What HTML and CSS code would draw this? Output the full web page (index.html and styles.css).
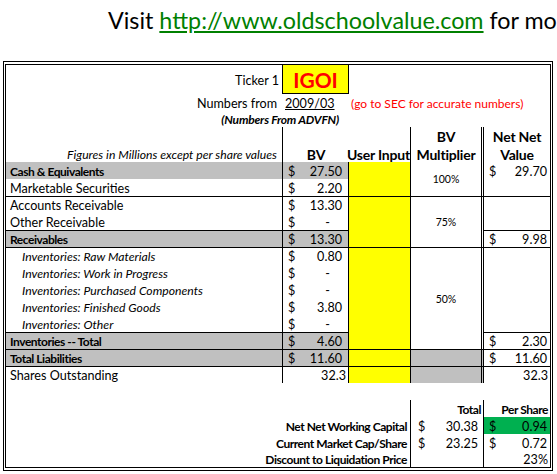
FILE: index.html
```html
<!DOCTYPE html>
<html>
<head>
<meta charset="utf-8">
<link rel="stylesheet" href="styles.css">
</head>
<body>
<div class="banner">Visit <a class="link" href="#">http://www.oldschoolvalue.com</a> for more great investing tools</div>
<div class="sheet">
  <div class="grid">
    <!-- r1 -->
    <div class="cell right pr4">Ticker 1</div>
    <div class="cell ticker">IGOI</div>
    <div class="cell span3"></div>
    <!-- r2 -->
    <div class="cell right pr6">Numbers from</div>
    <div class="cell date"><span class="u">2009/03</span></div>
    <div class="cell span3 note">(go to SEC for accurate numbers)</div>
    <!-- r3 -->
    <div class="cell span2 right source">(Numbers From ADVFN)</div>
    <div class="cell span3"></div>
    <!-- r4 -->
    <div class="cell br"></div>
    <div class="cell"></div>
    <div class="cell br"></div>
    <div class="cell bdbl head">BV</div>
    <div class="cell head">Net Net</div>
    <!-- r5 -->
    <div class="cell br right pr5 figures">Figures in Millions except per share values</div>
    <div class="cell head">BV</div>
    <div class="cell br head tight">User Input</div>
    <div class="cell bdbl head">Multiplier</div>
    <div class="cell head">Value</div>

    <!-- data row 1 -->
    <div class="cell lbl gray bold br">Cash &amp; Equivalents</div>
    <div class="cell acc gray br"><span>$</span><span>27.50</span></div>
    <div class="cell yellow br rs2"></div>
    <div class="cell bdbl rs2 pct">100%</div>
    <div class="cell acc5"><span>$</span><span>29.70</span></div>
    <!-- 2 -->
    <div class="cell lbl br">Marketable Securities</div>
    <div class="cell acc br"><span>$</span><span>2.20</span></div>
    <div class="cell"></div>
    <!-- 3 -->
    <div class="cell lbl br bt">Accounts Receivable</div>
    <div class="cell acc br bt"><span>$</span><span>13.30</span></div>
    <div class="cell yellow br bt rs3"></div>
    <div class="cell bdbl bt rs3 pct">75%</div>
    <div class="cell bt"></div>
    <!-- 4 -->
    <div class="cell lbl br">Other Receivable</div>
    <div class="cell acc br"><span>$</span><span class="dash">-</span></div>
    <div class="cell"></div>
    <!-- 5 -->
    <div class="cell lbl gray bold br bt">Receivables</div>
    <div class="cell acc gray br bt"><span>$</span><span>13.30</span></div>
    <div class="cell acc5 bt"><span>$</span><span>9.98</span></div>
    <!-- 6 -->
    <div class="cell lbl ind br bt">Inventories: Raw Materials</div>
    <div class="cell acc br bt"><span>$</span><span>0.80</span></div>
    <div class="cell yellow br bt rs6"></div>
    <div class="cell bdbl bt rs6 pct">50%</div>
    <div class="cell bt"></div>
    <!-- 7 -->
    <div class="cell lbl ind br">Inventories: Work in Progress</div>
    <div class="cell acc br"><span>$</span><span class="dash">-</span></div>
    <div class="cell"></div>
    <!-- 8 -->
    <div class="cell lbl ind br">Inventories: Purchased Components</div>
    <div class="cell acc br"><span>$</span><span class="dash">-</span></div>
    <div class="cell"></div>
    <!-- 9 -->
    <div class="cell lbl ind br">Inventories: Finished Goods</div>
    <div class="cell acc br"><span>$</span><span>3.80</span></div>
    <div class="cell"></div>
    <!-- 10 -->
    <div class="cell lbl ind br">Inventories: Other</div>
    <div class="cell acc br"><span>$</span><span class="dash">-</span></div>
    <div class="cell"></div>
    <!-- 11 -->
    <div class="cell lbl gray bold br bt">Inventories -- Total</div>
    <div class="cell acc gray br bt"><span>$</span><span>4.60</span></div>
    <div class="cell acc5 bt"><span>$</span><span>2.30</span></div>
    <!-- 12 -->
    <div class="cell lbl gray bold br bt">Total Liabilities</div>
    <div class="cell acc gray br bt"><span>$</span><span>11.60</span></div>
    <div class="cell yellow br bt"></div>
    <div class="cell gray bdbl bt"></div>
    <div class="cell acc5 bt"><span>$</span><span>11.60</span></div>
    <!-- 13 -->
    <div class="cell lbl br bt">Shares Outstanding</div>
    <div class="cell num br bt">32.3</div>
    <div class="cell yellow br bt"></div>
    <div class="cell gray bdbl bt"></div>
    <div class="cell num bt">32.3</div>

    <!-- gap -->
    <div class="cell span5"></div>

    <!-- summary -->
    <div class="cell span3 br"></div>
    <div class="cell br num bold">Total</div>
    <div class="cell num bold">Per Share</div>

    <div class="cell span3 br sumlbl">Net Net Working Capital</div>
    <div class="cell br acc4"><span>$</span><span>30.38</span></div>
    <div class="cell acc5 green"><span>$</span><span>0.94</span></div>

    <div class="cell span3 br sumlbl">Current Market Cap/Share</div>
    <div class="cell br acc4"><span>$</span><span>23.25</span></div>
    <div class="cell acc5"><span>$</span><span>0.72</span></div>

    <div class="cell span3 br sumlbl">Discount to Liquidation Price</div>
    <div class="cell br"></div>
    <div class="cell num">23%</div>
  </div>
</div>
</body>
</html>
```

FILE: styles.css
```css
html, body {
  margin: 0;
  padding: 0;
  background: #fff;
}

body {
  font-family: Lato, "Liberation Sans", sans-serif;
  color: #000;
  width: 557px;
  height: 474px;
  overflow: hidden;
}

.banner {
  height: 61px;
  box-sizing: border-box;
  padding: 4px 0 0 108px;
  font-size: 23.3px;
  line-height: 32px;
  white-space: nowrap;
  overflow: hidden;
}

.link {
  color: #008000;
  text-decoration: underline;
}

.sheet {
  margin-left: 3px;
  width: 550px;
  box-sizing: border-box;
  border-style: double;
  border-color: #000;
  border-width: 4px 3px;
}

.grid {
  display: grid;
  grid-template-columns: 277px 66px 62px 73px 66px;
  grid-template-rows: 29px 17px 16px 18px 17px repeat(13, 17px) 17px 17px 17px 17px 16px;
  font-size: 12.6px;
}

.cell {
  box-sizing: border-box;
  display: flex;
  align-items: center;
  line-height: 17px;
  padding-top: 1px;
  white-space: nowrap;
  min-width: 0;
}

.span2 { grid-column: span 2; }
.span3 { grid-column: span 3; }
.span5 { grid-column: span 5; }
.rs2 { grid-row: span 2; }
.rs3 { grid-row: span 3; }
.rs6 { grid-row: span 6; }

.br { border-right: 1px solid #000; }
.bdbl { border-right: 3px double #000; }
.bt { border-top: 1px solid #000; }

.right { justify-content: flex-end; }
.pr4 { padding-right: 4px; }
.pr5 { padding-right: 5px; }
.pr6 { padding-right: 6px; }

.gray { background: #c0c0c0; }
.yellow { background: #ffff00; }
.green { background: #00b050; }
.bold {
  font-weight: 700;
  font-size: 12px;
  letter-spacing: -0.45px;
}

.ticker {
  margin-left: -1px;
  border: 1px solid #000;
  border-top: none;
  background: #ffff00;
  color: #ff0000;
  font-weight: 700;
  font-size: 21px;
  justify-content: center;
  padding-top: 0;
}

.date { padding-left: 2px; }
.u { text-decoration: underline; }

.note {
  color: #ff0000;
  font-size: 12px;
  padding-left: 2px;
}

.source {
  font-weight: 700;
  font-style: italic;
  font-size: 12px;
  letter-spacing: -0.2px;
  padding-right: 10px;
}

.head {
  font-weight: 700;
  font-size: 14px;
  letter-spacing: -0.2px;
  justify-content: center;
}

.tight { justify-content: flex-end; overflow: visible; }

.figures {
  font-style: italic;
  font-size: 12.2px;
}

.lbl { padding-left: 4px; }
.ind {
  padding-left: 16px;
  font-style: italic;
  font-size: 12.2px;
}

.acc {
  justify-content: space-between;
  padding-left: 5px;
  padding-right: 6px;
}
.acc4 {
  justify-content: space-between;
  padding-left: 7px;
  padding-right: 5px;
}
.acc5 {
  justify-content: space-between;
  padding-left: 5px;
  padding-right: 3px;
}
.dash { padding-right: 12px; }

.num {
  justify-content: flex-end;
  padding-right: 2px;
}

.pct {
  justify-content: center;
  font-size: 10.5px;
}

.sumlbl {
  justify-content: flex-end;
  font-weight: 700;
  font-size: 12px;
  letter-spacing: -0.45px;
  padding-right: 3px;
}
```
